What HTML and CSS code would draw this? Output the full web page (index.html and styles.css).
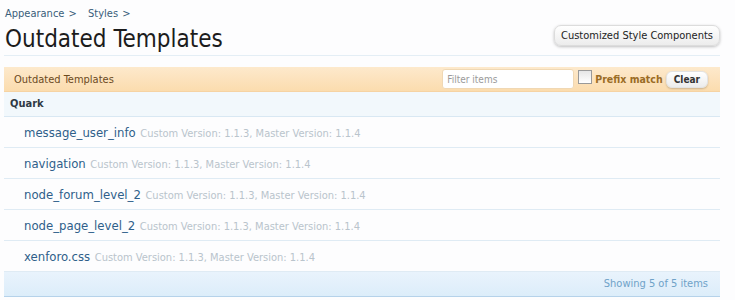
FILE: index.html
```html
<!DOCTYPE html>
<html lang="en">
<head>
    <meta charset="UTF-8">
    <title>Outdated Templates</title>
    <link rel="stylesheet" href="styles.css">
</head>
<body>
    <div class="page">
        <div class="breadcrumb">
            <a href="#">Appearance</a> <span class="sep">&gt;</span>
            <a href="#">Styles</a> <span class="sep">&gt;</span>
        </div>
        <div class="title-bar">
            <h1>Outdated Templates</h1>
            <button class="top-button">Customized Style Components</button>
        </div>

        <div class="list">
            <div class="list-head">
                <span class="list-title">Outdated Templates</span>
                <div class="filter">
                    <input type="text" class="filter-input" placeholder="Filter items">
                    <label class="prefix"><span class="check"></span>Prefix match</label>
                    <button class="clear">Clear</button>
                </div>
            </div>
            <div class="group">Quark</div>
            <div class="item"><a href="#">message_user_info</a> <span class="meta">Custom Version: 1.1.3, Master Version: 1.1.4</span></div>
            <div class="item"><a href="#">navigation</a> <span class="meta">Custom Version: 1.1.3, Master Version: 1.1.4</span></div>
            <div class="item"><a href="#">node_forum_level_2</a> <span class="meta">Custom Version: 1.1.3, Master Version: 1.1.4</span></div>
            <div class="item"><a href="#">node_page_level_2</a> <span class="meta">Custom Version: 1.1.3, Master Version: 1.1.4</span></div>
            <div class="item"><a href="#">xenforo.css</a> <span class="meta">Custom Version: 1.1.3, Master Version: 1.1.4</span></div>
            <div class="list-foot">Showing 5 of 5 items</div>
        </div>
    </div>
</body>
</html>
```

FILE: styles.css
```css
body {
    margin: 0;
    background-color: #fdfdfe;
    font-family: "DejaVu Sans Condensed", "DejaVu Sans", Tahoma, sans-serif;
    color: #222;
}

a {
    text-decoration: none;
}

.page {
    width: 716px;
    margin-left: 4px;
    padding-top: 7px;
}

.breadcrumb {
    font-size: 11px;
    height: 15px;
    line-height: 14px;
    padding-left: 1px;
    color: #3a5e7a;
}

.breadcrumb a {
    color: #3a5e7a;
}

.breadcrumb .sep {
    margin-left: 1px;
    margin-right: 8px;
}

.title-bar {
    display: flex;
    justify-content: space-between;
    align-items: flex-start;
    border-bottom: 1px solid #e4eef5;
    height: 33px;
}

h1 {
    margin: 3px 0 0 1px;
    font-size: 24px;
    font-weight: normal;
    line-height: 28px;
    color: #1c1c1c;
}

.top-button {
    margin-top: 3px;
    font-family: inherit;
    font-size: 11px;
    color: #222;
    padding: 3px 6px;
    border: 1px solid #dcdcdc;
    border-radius: 7px;
    background: linear-gradient(#ffffff, #ececec);
    box-shadow: 0 1px 3px rgba(0, 0, 0, 0.25);
}

.list {
    margin-top: 11px;
}

.list-head {
    display: flex;
    justify-content: space-between;
    align-items: center;
    height: 24px;
    padding-left: 10px;
    background: linear-gradient(#fde9cc, #fbdcae);
    border-bottom: 1px solid #f6d3a3;
}

.list-title {
    font-size: 11px;
    color: #6b4a1e;
}

.filter {
    display: flex;
    align-items: center;
    padding-right: 12px;
}

.filter-input {
    width: 122px;
    height: 14px;
    padding: 2px 4px;
    font-family: inherit;
    font-size: 10px;
    border: 1px solid #f0d8b4;
    border-radius: 3px;
    background-color: #fff;
}

.filter-input::placeholder {
    color: #9a9a9a;
}

.prefix {
    display: flex;
    align-items: center;
    font-size: 10.5px;
    font-weight: bold;
    color: #9a6c25;
    margin-left: 4px;
}

.check {
    width: 12px;
    height: 12px;
    margin-right: 3px;
    margin-top: -4px;
    border: 1px solid #999;
    background: linear-gradient(#e6e6e6, #ffffff);
}

.clear {
    margin-left: 3px;
    font-family: inherit;
    font-size: 10px;
    font-weight: bold;
    color: #333;
    padding: 2px 7px;
    border: 1px solid #e3e3e3;
    border-radius: 6px;
    background: linear-gradient(#ffffff, #ececec);
    box-shadow: 0 1px 2px rgba(0, 0, 0, 0.2);
}

.group {
    height: 24px;
    line-height: 24px;
    padding-left: 6px;
    font-size: 11px;
    font-weight: bold;
    color: #2f3a44;
    background-color: #f2f8fc;
    border-bottom: 1px solid #d9e8f3;
}

.item {
    height: 30px;
    line-height: 30px;
    padding-left: 20px;
    border-bottom: 1px solid #dfebf4;
    white-space: nowrap;
}

.item a {
    font-size: 13px;
    color: #2f5f8a;
}

.item .meta {
    font-size: 11px;
    color: #b9c4cc;
}

.list-foot {
    height: 24px;
    line-height: 24px;
    padding-right: 12px;
    text-align: right;
    font-size: 11px;
    color: #6fa2c8;
    background: linear-gradient(#e9f3fc, #dcedfa);
    border-bottom: 1px solid #b5d2ea;
}
```
